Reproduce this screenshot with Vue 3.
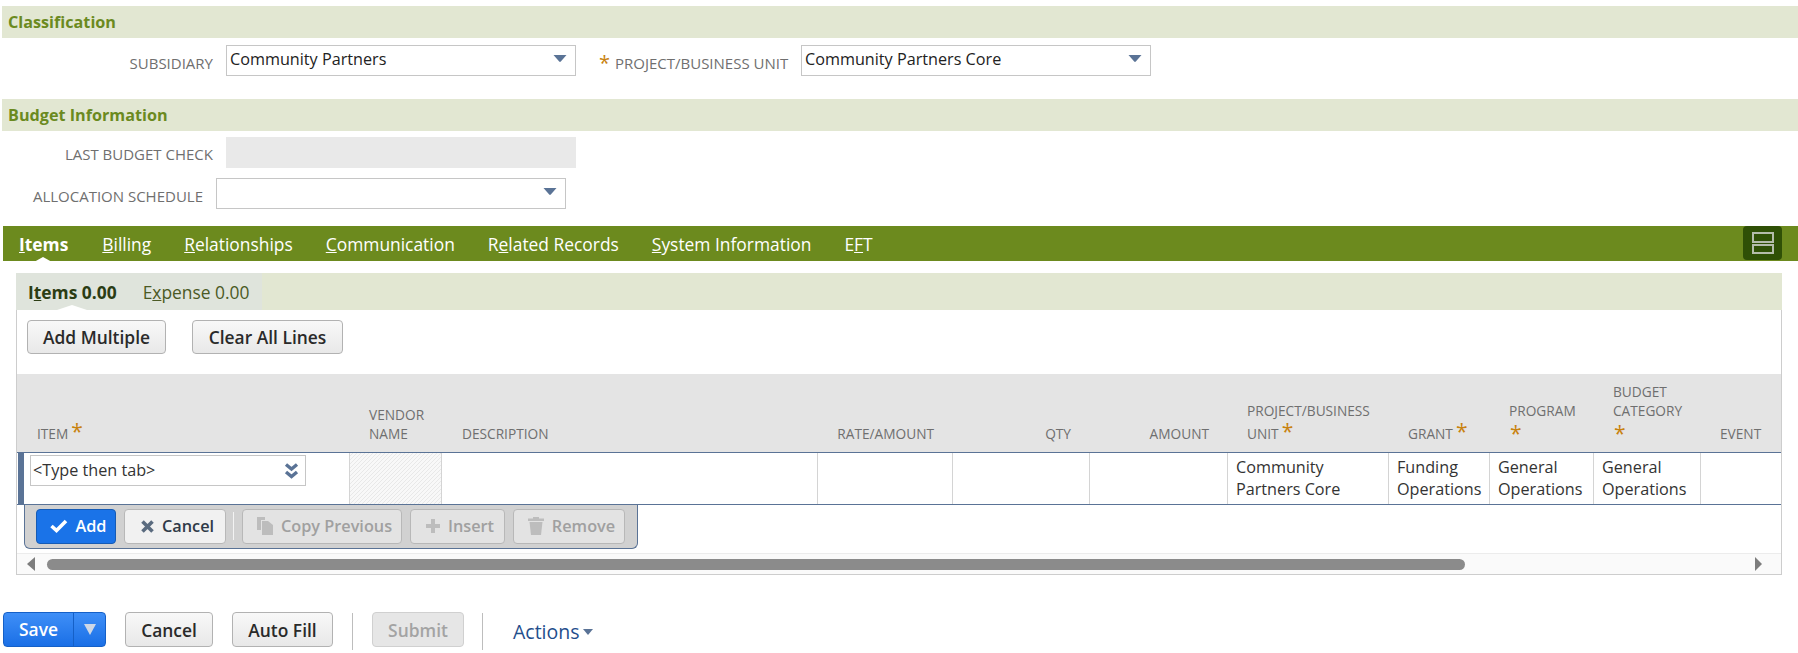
<script setup>
const tabs = [
  { pre: '', key: 'I', post: 'tems', active: true },
  { pre: '', key: 'B', post: 'illing' },
  { pre: '', key: 'R', post: 'elationships' },
  { pre: '', key: 'C', post: 'ommunication' },
  { pre: 'R', key: 'e', post: 'lated Records' },
  { pre: '', key: 'S', post: 'ystem Information' },
  { pre: 'E', key: 'F', post: 'T' }
]
</script>

<template>
  <div class="page">
    <div class="band">Classification</div>
    <div class="form-row row-a">
      <label class="lbl lbl-sub">SUBSIDIARY</label>
      <div class="sel">
        <span>Community Partners</span>
        <svg class="caret" width="14" height="7" viewBox="0 0 14 7"><path d="M0.5 0H13.5L7.8 6.6Q7 7.2 6.2 6.6Z" /></svg>
      </div>
      <span class="star star-form">*</span>
      <label class="lbl lbl-proj">PROJECT/BUSINESS UNIT</label>
      <div class="sel">
        <span>Community Partners Core</span>
        <svg class="caret" width="14" height="7" viewBox="0 0 14 7"><path d="M0.5 0H13.5L7.8 6.6Q7 7.2 6.2 6.6Z" /></svg>
      </div>
    </div>

    <div class="band band-b">Budget Information</div>
    <div class="form-row row-b">
      <label class="lbl lbl-sub">LAST BUDGET CHECK</label>
      <div class="readonly"></div>
    </div>
    <div class="form-row row-c">
      <label class="lbl lbl-alloc">ALLOCATION SCHEDULE</label>
      <div class="sel">
        <svg class="caret" width="14" height="7" viewBox="0 0 14 7"><path d="M0.5 0H13.5L7.8 6.6Q7 7.2 6.2 6.6Z" /></svg>
      </div>
    </div>

    <div class="tabbar">
      <span v-for="t in tabs" :key="t.key" class="tab" :class="{ 'tab-on': t.active }">{{ t.pre }}<u>{{ t.key }}</u>{{ t.post }}</span>
      <div class="layout-btn">
        <svg width="24" height="24" viewBox="0 0 24 24" fill="none" stroke="#b4bcab" stroke-width="2">
          <rect x="2" y="2" width="20" height="9" />
          <rect x="2" y="14" width="20" height="8" />
        </svg>
      </div>
    </div>

    <section class="panel">
      <div class="subbar">
        <div class="subtabs">
          <span class="subtab subtab-on">I<u>t</u>ems 0.00</span>
          <span class="subtab">E<u>x</u>pense 0.00</span>
        </div>
      </div>
      <div class="top-actions">
        <button class="btn btn-am">Add Multiple</button>
        <button class="btn btn-cl">Clear All Lines</button>
      </div>

      <div class="grid head">
        <div class="th th-item">ITEM<span class="star star-i">*</span></div>
        <div class="th th-vendor">VENDOR<br />NAME</div>
        <div class="th th-desc">DESCRIPTION</div>
        <div class="th th-r">RATE/AMOUNT</div>
        <div class="th th-r">QTY</div>
        <div class="th th-r">AMOUNT</div>
        <div class="th">PROJECT/BUSINESS<span class="th-last">UNIT<span class="star star-i">*</span></span></div>
        <div class="th">GRANT<span class="star star-i">*</span></div>
        <div class="th th-wrap">PROGRAM<span class="star star-b">*</span></div>
        <div class="th th-wrap">BUDGET<br />CATEGORY<span class="star star-b">*</span></div>
        <div class="th">EVENT</div>
      </div>

      <div class="grid body">
        <div class="td td-item">
          <div class="item-input">
            <span>&lt;Type then tab&gt;</span>
            <svg width="15" height="16" viewBox="0 0 15 16" fill="none" stroke="#5a7396" stroke-width="3.4" stroke-linejoin="miter">
              <path d="M2 1.5L7.5 6L13 1.5" />
              <path d="M2 9L7.5 13.5L13 9" />
            </svg>
          </div>
        </div>
        <div class="td td-hatch"></div>
        <div class="td"></div>
        <div class="td"></div>
        <div class="td"></div>
        <div class="td"></div>
        <div class="td">Community Partners Core</div>
        <div class="td">Funding Operations</div>
        <div class="td">General Operations</div>
        <div class="td">General Operations</div>
        <div class="td td-last"></div>
      </div>

      <div class="line-tools">
        <button class="tbtn tbtn-add">
          <svg width="18" height="14" viewBox="0 0 18 14" fill="none" stroke="#fff" stroke-width="3.6"><path d="M1.5 7L6.5 11.5L16 2" /></svg>
          Add
        </button>
        <button class="tbtn tbtn-cancel">
          <svg width="13" height="13" viewBox="0 0 13 13" fill="none" stroke="#5a6b7f" stroke-width="3.6"><path d="M1.5 1.5L11.5 11.5M11.5 1.5L1.5 11.5" /></svg>
          Cancel
        </button>
        <span class="tsep"></span>
        <button class="tbtn tbtn-off tbtn-copy">
          <svg width="16" height="18" viewBox="0 0 16 18" fill="#bdbdbd"><path d="M0 0H8V3H4V13H0Z" /><path d="M5 4H11L16 8V18H5Z" /></svg>
          Copy Previous
        </button>
        <button class="tbtn tbtn-off tbtn-ins">
          <svg width="14" height="14" viewBox="0 0 14 14" fill="#bdbdbd"><path d="M5 0H9V5H14V9H9V14H5V9H0V5H5Z" /></svg>
          Insert
        </button>
        <button class="tbtn tbtn-off tbtn-rem">
          <svg width="16" height="18" viewBox="0 0 16 18" fill="#bdbdbd"><path d="M5 0H11V1.5H16V4H0V1.5H5Z" /><path d="M1.5 5H14.5L13 18H3Z" /></svg>
          Remove
        </button>
      </div>

      <div class="hscroll">
        <svg width="9" height="14" viewBox="0 0 9 14" fill="#7d7d7d"><path d="M8 0V14L0 7Z" /></svg>
        <div class="thumb"></div>
        <svg width="9" height="14" viewBox="0 0 9 14" fill="#7d7d7d"><path d="M1 0V14L8 7Z" /></svg>
      </div>
    </section>

    <div class="footer">
      <div class="save">
        <span class="save-main">Save</span>
        <span class="save-more"><svg width="12" height="11" viewBox="0 0 12 11" fill="#cfd8e6"><path d="M0 0H12L6 11Z" /></svg></span>
      </div>
      <button class="btn btn-foot btn-c">Cancel</button>
      <button class="btn btn-foot btn-f">Auto Fill</button>
      <span class="fsep fsep-a"></span>
      <button class="btn btn-foot btn-s" disabled>Submit</button>
      <span class="fsep fsep-b"></span>
      <span class="actions">Actions<svg width="10" height="6" viewBox="0 0 10 6" fill="#5a7396"><path d="M0 0H10L5 6Z" /></svg></span>
    </div>
  </div>
</template>

<style scoped>
.page {
  width: 1798px;
  height: 653px;
  overflow: hidden;
  background: #fff;
  font-family: "Open Sans", "Noto Sans", sans-serif;
  font-size: 15px;
  color: #222;
  padding-top: 6px;
  box-sizing: border-box;
}
.band {
  height: 32px;
  margin-left: 2px;
  padding-left: 6px;
  background: #e2e7d2;
  color: #6b8a1f;
  font-weight: 700;
  font-size: 16.2px;
  line-height: 33px;
  box-sizing: border-box;
}
.band-b { margin-top: 23px; }
.form-row { display: flex; align-items: center; }
.row-a { margin-top: 7px; height: 31px; }
.row-b { margin-top: 6px; height: 31px; }
.row-c { margin-top: 10px; height: 31px; }
.lbl {
  font-size: 15px;
  color: #6f6f6f;
  text-align: right;
  white-space: nowrap;
  padding-top: 5px;
}
.lbl-sub { width: 213px; margin-right: 13px; }
.row-b .lbl { padding-top: 2px; }
.lbl-alloc { width: 203px; margin-right: 13px; padding-top: 4px; }
.lbl-proj { width: 173px; margin-right: 13px; text-align: left; }
.sel {
  width: 350px;
  height: 31px;
  border: 1px solid #c6c6c6;
  box-sizing: border-box;
  display: flex;
  align-items: center;
  justify-content: space-between;
  padding: 0 8px 0 3px;
  font-size: 16.2px;
  line-height: 28px;
  background: #fff;
}
.sel span { padding-bottom: 3px; }
.sel .caret { margin-left: auto; margin-bottom: 4px; }
.caret path { fill: #5a7396; }
.readonly { width: 350px; height: 31px; background: #e9e9e9; }
.star { color: #c8820f; font-size: 19px; line-height: 10px; }
.star-form { margin-left: 23px; width: 16px; font-size: 20px; padding-top: 4px; }

.tabbar {
  margin-top: 17px;
  margin-left: 3px;
  height: 35px;
  background: #6c8a1e;
  display: flex;
  align-items: center;
  position: relative;
  padding-left: 16px;
  color: #fff;
}
.tab {
  font-size: 17.4px;
  margin-right: 33px;
  position: relative;
  line-height: 35px;
  padding-top: 1px;
  white-space: nowrap;
}
.tab-on { font-weight: 700; margin-right: 34px; }
.tab-on::after {
  content: "";
  position: absolute;
  left: 15px;
  bottom: 0;
  border-left: 9px solid transparent;
  border-right: 9px solid transparent;
  border-bottom: 5px solid #fff;
}
.layout-btn {
  position: absolute;
  right: 16px;
  top: 0;
  width: 39px;
  height: 34px;
  background: #2f5006;
  border-radius: 4px;
  display: flex;
  align-items: center;
  justify-content: center;
}

.panel {
  margin: 12px 16px 0 16px;
  height: 302px;
  border: 1px solid #cdcdcd;
  border-top: 0;
  box-sizing: border-box;
}
.subbar { height: 37px; background: #e2e7d2; margin: 0 -1px; }
.subtabs {
  width: 246px;
  height: 37px;
  background: #dfe4dc;
  display: flex;
  align-items: center;
  padding-left: 12px;
  box-sizing: border-box;
  position: relative;
}
.subtab { font-size: 17.4px; color: #4b5a24; margin-right: 26px; white-space: nowrap; }
.subtab-on { font-weight: 700; color: #2b3d14; position: relative; }
.subtabs::after {
  content: "";
  position: absolute;
  left: 41px;
  bottom: 0;
  border-left: 15px solid transparent;
  border-right: 15px solid transparent;
  border-bottom: 5px solid #fff;
}
.top-actions { display: flex; gap: 26px; padding: 10px 0 0 10px; height: 64px; box-sizing: border-box; }
.btn {
  height: 34px;
  border: 1px solid #b2b2b2;
  border-radius: 4px;
  background: linear-gradient(#f8f8f8, #e8e8e8);
  font-family: inherit;
  font-size: 17.4px;
  font-weight: 600;
  color: #2a2a2a;
  padding: 0;
  white-space: nowrap;
}
.btn-am { width: 139px; }
.btn-cl { width: 151px; }
.grid {
  display: grid;
  grid-template-columns: 332px 93px 375px 135px 137px 138px 161px 101px 104px 107px 80px;
}
.head { height: 78px; background: #e4e4e4; margin-top: 0; }
.th {
  font-size: 13.7px;
  line-height: 19px;
  color: #6f6f6f;
  align-self: end;
  padding: 0 0 9px 20px;
  white-space: nowrap;
}
.th-last { display: block; margin-top: 4px; }
.star-i { font-size: 21px; margin-left: 3px; }
.star-b { display: block; font-size: 21px; height: 19px; line-height: 26px; padding-left: 1px; }
.th-wrap { padding-bottom: 13px; }
.th-r { text-align: right; padding: 0 18px 9px 0; }
.body {
  height: 53px;
  border-top: 1px solid #5a7396;
  border-bottom: 1px solid #5a7396;
  box-sizing: border-box;
  background: #fff;
}
.td {
  border-left: 1px solid #d4d4d4;
  padding: 3px 6px 0 8px;
  font-size: 16.2px;
  line-height: 22px;
  color: #333;
}
.td-item {
  border-left: 6px solid #5a7396;
  padding: 2px 0 0 6px;
  margin-left: 1px;
  width: 325px;
  box-sizing: border-box;
}
.td-hatch {
  background: repeating-linear-gradient(135deg, #f8f8f8 0 1.8px, #e8e8e8 1.8px 2.828px);
  padding: 0;
  border-right: 1px solid #d4d4d4;
}
.td-hatch + .td { border-left: 0; }
.item-input {
  width: 276px;
  height: 31px;
  border: 1px solid #c6c6c6;
  box-sizing: border-box;
  display: flex;
  align-items: center;
  justify-content: space-between;
  padding: 0 6px 0 2px;
  font-size: 16.2px;
  color: #333;
}
.item-input span { padding-bottom: 1px; }
.line-tools {
  margin-left: 7px;
  width: 614px;
  height: 44px;
  background: #d1d1d1;
  border: 1px solid #5a7396;
  border-top: 0;
  border-radius: 0 0 6px 6px;
  box-sizing: border-box;
  display: flex;
  align-items: center;
  padding: 0 0 1px 11px;
}
.tbtn {
  height: 35px;
  border-radius: 4px;
  border: 1px solid #b8b8b8;
  background: #f1f1f1;
  font-family: inherit;
  font-size: 16.3px;
  font-weight: 600;
  color: #2f3a48;
  display: flex;
  align-items: center;
  justify-content: center;
  gap: 8px;
  padding: 0 0 0 5px;
  box-sizing: border-box;
  white-space: nowrap;
}
.tbtn-add {
  width: 80px;
  background: #1a73e8;
  border-color: #155bb5;
  color: #fff;
  margin-right: 8px;
  gap: 7px;
}
.tbtn-cancel { width: 102px; }
.tsep { width: 1px; height: 28px; background: #f3f3f3; margin: 0 8px 0 7px; }
.tbtn-off { background: #e3e3e3; color: #a0a0a0; }
.tbtn-copy { width: 160px; margin-right: 8px; }
.tbtn-ins { width: 95px; margin-right: 8px; }
.tbtn-rem { width: 112px; }
.hscroll {
  margin-top: 4px;
  height: 21px;
  border-top: 1px solid #ececec;
  background: #fafafa;
  box-sizing: border-box;
  display: flex;
  align-items: center;
  padding: 0 10px 0 10px;
}
.thumb {
  width: 1418px;
  height: 11px;
  background: #8b8b8b;
  border-radius: 6px;
  margin: 0 289px 0 11px;
}

.footer {
  display: flex;
  align-items: flex-start;
  margin-top: 37px;
  padding-left: 3px;
}
.save {
  width: 103px;
  height: 35px;
  border: 1px solid #1560c7;
  border-radius: 4px;
  background: linear-gradient(#3f8ff7, #1a6fe6);
  box-sizing: border-box;
  display: flex;
  color: #fff;
  font-weight: 600;
  font-size: 17.4px;
}
.save-main { width: 69px; text-align: center; line-height: 33px; }
.save-more { flex: 1; border-left: 1px solid #1560c7; display: flex; align-items: center; justify-content: center; }
.btn-foot { height: 35px; padding: 0; }
.btn-c { width: 88px; margin-left: 19px; }
.btn-f { width: 101px; margin-left: 19px; }
.btn-s {
  width: 92px;
  background: #e6e6e6;
  border-color: #d0d0d0;
  color: #a3a3a3;
}
.fsep { width: 1px; height: 37px; background: #bdbdbd; margin-top: 1px; }
.fsep-a { margin-left: 19px; margin-right: 19px; }
.fsep-b { margin-left: 18px; margin-right: 30px; }
.actions {
  color: #1f4e8c;
  font-size: 19.5px;
  font-weight: 400;
  line-height: 40px;
  display: flex;
  align-items: center;
  gap: 3px;
  white-space: nowrap;
}
</style>

<style>
html, body { margin: 0; overflow: hidden; }
</style>
